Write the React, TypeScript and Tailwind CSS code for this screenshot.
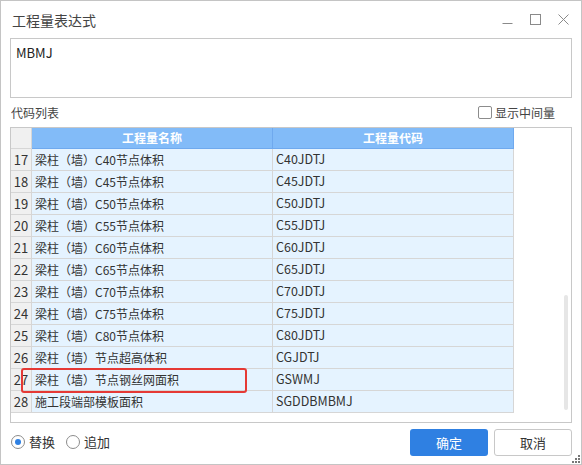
import React from "react";

const rows: [string, string, string][] = [
  ["17", "梁柱（墙）C40节点体积", "C40JDTJ"],
  ["18", "梁柱（墙）C45节点体积", "C45JDTJ"],
  ["19", "梁柱（墙）C50节点体积", "C50JDTJ"],
  ["20", "梁柱（墙）C55节点体积", "C55JDTJ"],
  ["21", "梁柱（墙）C60节点体积", "C60JDTJ"],
  ["22", "梁柱（墙）C65节点体积", "C65JDTJ"],
  ["23", "梁柱（墙）C70节点体积", "C70JDTJ"],
  ["24", "梁柱（墙）C75节点体积", "C75JDTJ"],
  ["25", "梁柱（墙）C80节点体积", "C80JDTJ"],
  ["26", "梁柱（墙）节点超高体积", "CGJDTJ"],
  ["27", "梁柱（墙）节点钢丝网面积", "GSWMJ"],
  ["28", "施工段端部模板面积", "SGDDBMBMJ"],
];

const font = { fontFamily: '"Noto Sans CJK SC", "Noto Sans", sans-serif' };

export default function App() {
  return (
    <div
      className="w-[582px] h-[465px] bg-white border border-[#c4c4c4] flex flex-col text-[#333] relative overflow-hidden"
      style={font}
    >
      {/* title bar */}
      <div className="h-[37px] flex items-center pl-[11px] pr-[12px]">
        <div className="text-[14px] text-[#444] leading-none">工程量表达式</div>
        <div className="ml-auto flex items-center gap-[17px] text-[#8a8a8a]">
          <svg width="11" height="11" viewBox="0 0 11 11">
            <path d="M0.5 9.5 H10.5" stroke="#8a8a8a" strokeWidth="1" />
          </svg>
          <svg width="11" height="11" viewBox="0 0 11 11">
            <rect x="0.5" y="0.5" width="10" height="10" fill="none" stroke="#8a8a8a" strokeWidth="1" />
          </svg>
          <svg width="11" height="11" viewBox="0 0 11 11">
            <path d="M0.5 0.5 L10.5 10.5 M10.5 0.5 L0.5 10.5" stroke="#8a8a8a" strokeWidth="1" />
          </svg>
        </div>
      </div>

      {/* expression box */}
      <div className="mx-[9px] h-[60px] border border-[#c8c8c8] px-[5px] pt-[5px]">
        <div className="text-[13px] text-[#222] leading-[18px]">MBMJ</div>
      </div>

      {/* label row */}
      <div className="h-[29px] flex items-center pl-[10px] pr-[26px]">
        <div className="text-[12px] text-[#444]">代码列表</div>
        <label className="ml-auto flex items-center gap-[3px] text-[12px] text-[#444]">
          <span className="w-[14px] h-[13px] border border-[#8c8c8c] rounded-[2px] bg-white" />
          <span>显示中间量</span>
        </label>
      </div>

      {/* table */}
      <div className="mx-[9px] h-[296px] border border-[#c8c8c8] relative">
        <div className="flex h-[21px]">
          <div className="w-[21px] bg-[#f0f0f0] border-r border-b border-[#d6d6d6]" />
          <div className="w-[241px] bg-[#82bbf8] border-r border-b border-[#6fa9ee] flex items-center justify-center text-white text-[12px] font-bold">
            工程量名称
          </div>
          <div className="w-[241px] bg-[#82bbf8] border-r border-b border-[#6fa9ee] flex items-center justify-center text-white text-[12px] font-bold">
            工程量代码
          </div>
        </div>
        {rows.map(([n, name, code]) => (
          <div key={n} className="flex h-[22px] text-[12px] text-[#333]">
            <div className="w-[21px] bg-[#f0f0f0] border-r border-b border-[#d6d6d6] flex items-center justify-center text-[13px]">
              {n}
            </div>
            <div className="w-[241px] bg-[#e5f3ff] border-r border-b border-[#d6d6d6] flex items-center pl-[3px]">
              {name}
            </div>
            <div className="w-[241px] bg-[#e5f3ff] border-r border-b border-[#d6d6d6] flex items-center pl-[3px] text-[12.5px]">
              {code}
            </div>
          </div>
        ))}
        {/* highlight */}
        <div className="absolute left-[10px] top-[240px] w-[226px] h-[25px] border-2 border-[#e53935] rounded-[3px]" />
        {/* scrollbar */}
        <div className="absolute left-[553px] top-[167px] w-[4px] h-[115px] rounded-full bg-[#e6e6e6]" />
      </div>

      {/* bottom */}
      <div className="flex-1 flex items-start pt-[6px] pl-[10px] pr-[9px]">
        <div className="flex items-center h-[26px] text-[13px] text-[#333]">
          <span className="w-[14px] h-[14px] rounded-full border border-[#8c8c8c] flex items-center justify-center">
            <span className="w-[6px] h-[6px] rounded-full bg-[#2f80e2]" />
          </span>
          <span className="ml-[4px]">替换</span>
          <span className="ml-[11px] w-[14px] h-[14px] rounded-full border border-[#8c8c8c]" />
          <span className="ml-[4px]">追加</span>
        </div>
        <div className="ml-auto flex gap-[6px]">
          <button className="w-[78px] h-[27px] rounded-[3px] bg-[#2f80e2] text-white text-[13px]">确定</button>
          <button className="w-[78px] h-[27px] rounded-[3px] bg-white border border-[#c8c8c8] text-[#333] text-[13px]">取消</button>
        </div>
      </div>

      {/* resize grip */}
      <svg className="absolute right-[1px] bottom-[1px]" width="8" height="8" viewBox="0 0 8 8">
        <rect x="6" y="0" width="2" height="2" fill="#777" />
        <rect x="3" y="3" width="2" height="2" fill="#777" />
        <rect x="6" y="3" width="2" height="2" fill="#777" />
        <rect x="0" y="6" width="2" height="2" fill="#777" />
        <rect x="3" y="6" width="2" height="2" fill="#777" />
        <rect x="6" y="6" width="2" height="2" fill="#777" />
      </svg>
    </div>
  );
}
